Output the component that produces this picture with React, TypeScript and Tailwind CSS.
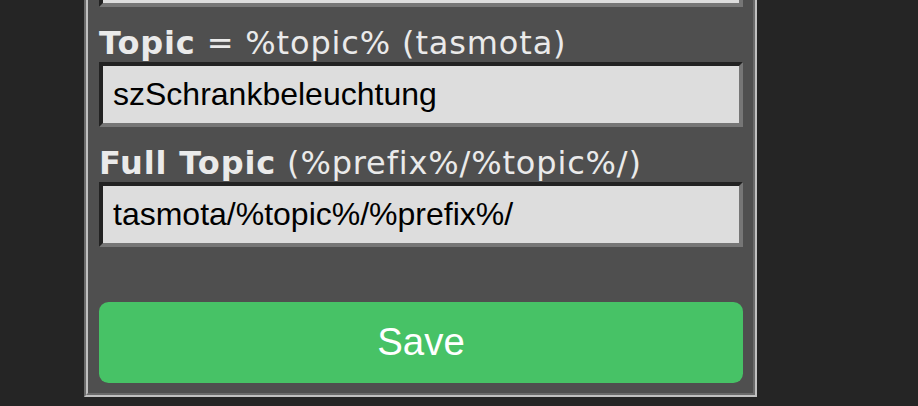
import React from "react";

function Field({ bold, rest, value }: { bold: string; rest: string; value: string }) {
  return (
    <div className="mt-[18px]">
      <div className="h-[37px] leading-[37px] whitespace-nowrap tracking-[0.85px]">
        <b className="font-bold">{bold}</b>
        {rest}
      </div>
      <input
        readOnly
        value={value}
        className="block w-full h-[65px] box-border border-4 border-t-[#222222] border-l-[#222222] border-r-[#767676] border-b-[#767676] bg-[#dddddd] text-black px-[10px] font-['Liberation_Sans',Arial,sans-serif] text-[32px] outline-none"
      />
    </div>
  );
}

export default function App() {
  return (
    <div className="h-[406px] overflow-hidden bg-[#252525]">
      <div className="ml-[84px] w-[673px] -mt-[72px] border-2 border-l-[#6b6b6b] border-t-[#6b6b6b] border-r-[#c0c0c0] border-b-[#c0c0c0]">
        <div className="border-2 border-l-[#c0c0c0] border-t-[#c0c0c0] border-r-[#6b6b6b] border-b-[#6b6b6b] bg-[#4f4f4f] pl-[11px] pr-[10px] pt-[10px] pb-[10px] font-['DejaVu_Sans',sans-serif] text-[32px] text-[#eaeaea]">
          <input
            readOnly
            value=""
            className="block w-full h-[65px] box-border border-4 border-t-[#222222] border-l-[#222222] border-r-[#767676] border-b-[#767676] bg-[#dddddd] text-black px-[10px] font-['Liberation_Sans',Arial,sans-serif] text-[32px] outline-none"
          />
          <Field bold="Topic" rest=" = %topic% (tasmota)" value="szSchrankbeleuchtung" />
          <Field bold="Full Topic" rest=" (%prefix%/%topic%/)" value="tasmota/%topic%/%prefix%/" />
          <button
            type="button"
            className="mt-[55px] block w-full h-[81px] rounded-[9.6px] bg-[#47c266] text-white font-['Liberation_Sans',Arial,sans-serif] text-[38.4px] leading-[76.8px]"
          >
            Save
          </button>
        </div>
      </div>
    </div>
  );
}
